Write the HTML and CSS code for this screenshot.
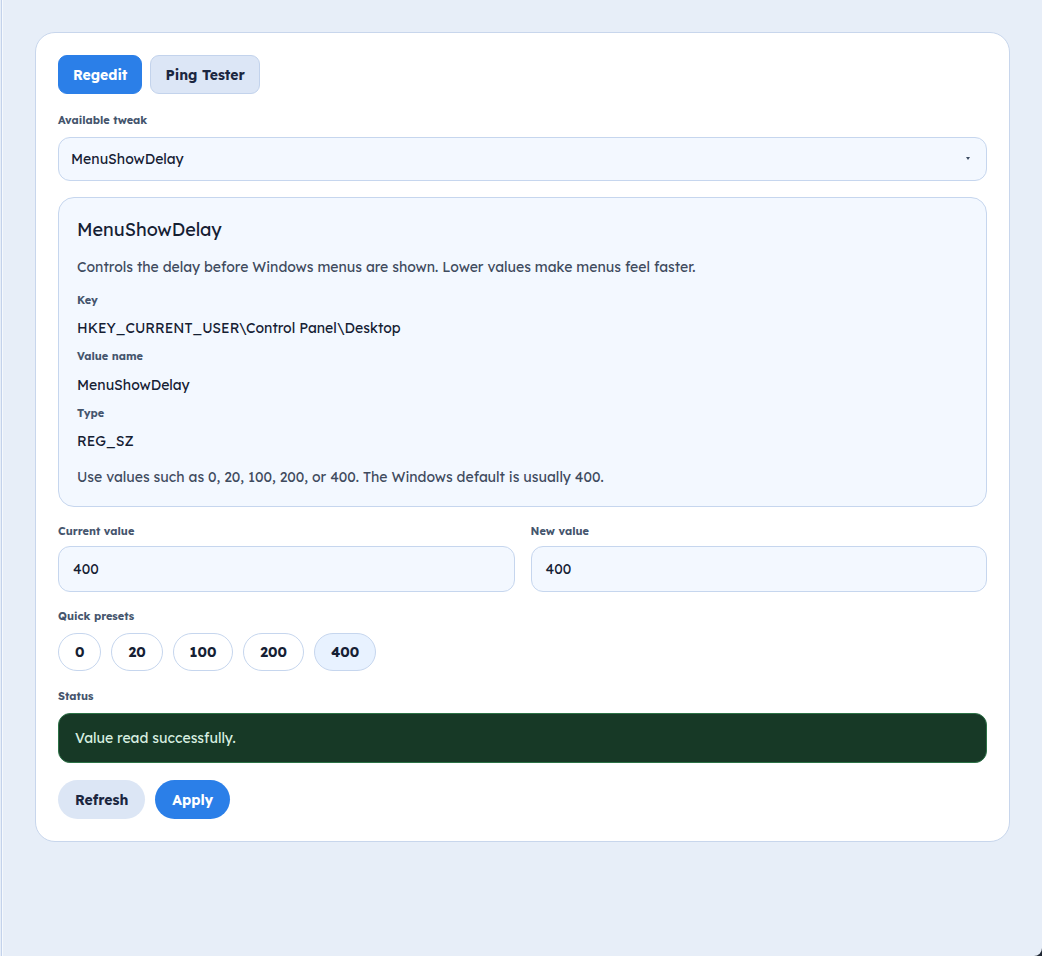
FILE: index.html
```html
<!DOCTYPE html>
<html lang="en">
<head>
<meta charset="utf-8">
<title>Regedit</title>
<link rel="stylesheet" href="styles.css">
</head>
<body>
<div class="app">
  <main class="card">
    <nav class="tabs">
      <button class="tab tab-active">Regedit</button>
      <button class="tab">Ping Tester</button>
    </nav>

    <section class="field">
      <div class="label">Available tweak</div>
      <div class="select-wrap">
        <div class="select">MenuShowDelay</div>
      </div>
    </section>

    <section class="info">
      <h2 class="info-title">MenuShowDelay</h2>
      <p class="info-desc">Controls the delay before Windows menus are shown. Lower values make menus feel faster.</p>
      <div class="kv-label">Key</div>
      <div class="kv-value">HKEY_CURRENT_USER\Control Panel\Desktop</div>
      <div class="kv-label kv-label-spaced">Value name</div>
      <div class="kv-value">MenuShowDelay</div>
      <div class="kv-label">Type</div>
      <div class="kv-value">REG_SZ</div>
      <p class="info-note">Use values such as 0, 20, 100, 200, or 400. The Windows default is usually 400.</p>
    </section>

    <section class="row">
      <div class="field">
        <div class="label">Current value</div>
        <div class="input">400</div>
      </div>
      <div class="field">
        <div class="label">New value</div>
        <div class="input">400</div>
      </div>
    </section>

    <section class="field">
      <div class="label">Quick presets</div>
      <div class="presets">
        <button class="pill">0</button>
        <button class="pill">20</button>
        <button class="pill">100</button>
        <button class="pill">200</button>
        <button class="pill pill-active">400</button>
      </div>
    </section>

    <section class="field field-status">
      <div class="label">Status</div>
      <div class="status">Value read successfully.</div>
    </section>

    <div class="actions">
      <button class="btn btn-secondary">Refresh</button>
      <button class="btn btn-primary">Apply</button>
    </div>
  </main>
</div>
</body>
</html>
```
FILE: styles.css
```css
* { box-sizing: border-box; }
html { background: #1f2733; }
body {
  margin: 0;
  min-height: 100vh;
  background: #e7eef8;
  border-bottom-right-radius: 8px;
  font-family: "Lexend", "Noto Sans", "Open Sans", sans-serif;
  color: #152033;
}
.app {
  min-height: 100vh;
  margin-left: 1px;
  border-left: 1px solid #c3d2eb;
  box-shadow: inset 1px 0 #f6f9fd;
  padding: 32px 32px 0 33px;
}
.card {
  background: #ffffff;
  border: 1px solid #c8d6ec;
  border-radius: 20px;
  padding: 22px;
  display: flex;
  flex-direction: column;
  gap: 16px;
}
button { font-family: inherit; cursor: pointer; }
.tabs { display: flex; gap: 8px; margin-bottom: 2px; }
.tab {
  height: 39px;
  padding: 0 14px;
  border-radius: 9px;
  border: 1px solid #c3d3ec;
  background: #dce6f6;
  color: #1b2640;
  font-size: 14px;
  font-weight: 700;
}
.tab-active { background: #2b7fe8; border-color: #2b7fe8; color: #ffffff; }
.field { display: flex; flex-direction: column; }
.field-status { margin-top: 1px; }
.label {
  font-size: 11px;
  font-weight: 700;
  line-height: 16px;
  color: #45556d;
  margin-bottom: 9px;
}
.row .label { margin-bottom: 7px; }
.select-wrap { position: relative; }
.select {
  height: 44px;
  border: 1px solid #c6d6ee;
  border-radius: 12px;
  background: #f3f8ff;
  padding: 0 12px;
  display: flex;
  align-items: center;
  font-size: 14px;
  color: #152033;
}
.select-wrap::after {
  content: "";
  position: absolute;
  right: 17px;
  top: 20px;
  border-left: 2px solid transparent;
  border-right: 2px solid transparent;
  border-top: 3px solid #3d4d63;
}
.info {
  background: #f3f8ff;
  border: 1px solid #c6d6ee;
  border-radius: 16px;
  padding: 20px 18px 18px;
  display: flex;
  flex-direction: column;
  gap: 10px;
}
.info h2, .info p { margin: 0; }
.info-title { font-size: 18px; font-weight: 400; line-height: 24px; color: #152033; }
.info-desc { font-size: 14px; line-height: 22px; color: #3f4b5e; margin-top: 4px !important; margin-bottom: 5px !important; }
.kv-label { font-size: 11px; font-weight: 700; line-height: 14px; color: #45556d; }
.kv-label-spaced { margin-bottom: 1px; }
.kv-value { font-size: 14px; line-height: 22px; color: #152033; }
.info-note { font-size: 14px; line-height: 22px; color: #3f4b5e; margin-top: 4px !important; }
.row { display: grid; grid-template-columns: 1fr 1fr; gap: 16px; }
.input {
  height: 46px;
  border: 1px solid #c6d6ee;
  border-radius: 12px;
  background: #f3f8ff;
  padding: 0 14px;
  display: flex;
  align-items: center;
  font-size: 14px;
  color: #152033;
}
.presets { display: flex; gap: 10px; }
.pill {
  height: 38px;
  min-width: 42px;
  padding: 0 16px;
  border-radius: 999px;
  border: 1px solid #c6d6ee;
  background: #ffffff;
  color: #152033;
  font-size: 14px;
  font-weight: 700;
}
.pill-active { background: #e8f2ff; }
.status {
  height: 50px;
  border: 1px solid #2c7246;
  border-radius: 12px;
  background: #173926;
  color: #d8efe0;
  padding: 0 16px;
  display: flex;
  align-items: center;
  font-size: 14px;
}
.actions { display: flex; gap: 10px; margin-top: 1px; }
.btn {
  height: 39px;
  padding: 0 17px;
  border-radius: 999px;
  border: none;
  font-size: 14px;
  font-weight: 700;
}
.btn-secondary { background: #dce6f5; color: #1b2640; }
.btn-primary { background: #2b7fe8; color: #ffffff; }
```
